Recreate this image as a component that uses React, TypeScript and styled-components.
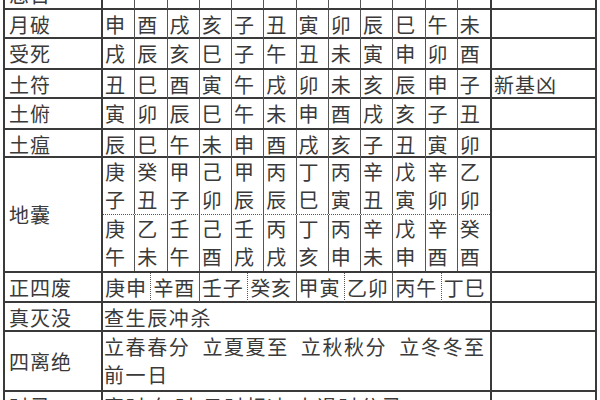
import React from 'react';
import styled, { createGlobalStyle } from 'styled-components';

const GlobalStyle = createGlobalStyle`
  html, body {
    margin: 0;
    padding: 0;
    background: #fff;
    overflow: hidden;
  }
  body {
    font-family: "Noto Sans CJK SC", "Noto Sans", sans-serif;
    color: #3a3a3a;
  }
`;

const LINE = '#3a3a3a';

const Sheet = styled.div`
  width: 594px;
  margin: -20px 0 0 3px;
  border-left: 2px solid ${LINE};
  border-right: 2px solid ${LINE};
  box-sizing: border-box;
`;

const Row = styled.div<{ $h: number }>`
  display: grid;
  grid-template-columns: 98px 389px 1fr;
  height: ${(p) => p.$h}px;
  border-bottom: 2px solid ${LINE};
  box-sizing: border-box;
`;

const Label = styled.div`
  display: flex;
  align-items: center;
  padding-left: 4px;
  font-size: 20px;
  letter-spacing: 1px;
  border-right: 2px solid ${LINE};
  white-space: nowrap;
`;

const Note = styled.div`
  display: flex;
  align-items: center;
  padding-left: 2px;
  font-size: 20px;
  letter-spacing: 1px;
`;

const Cells = styled.div<{ $n: number }>`
  display: grid;
  grid-template-columns: repeat(${(p) => p.$n}, 1fr);
  height: 100%;
  border-right: 2px solid ${LINE};
  box-sizing: border-box;
`;

const Cell = styled.div<{ $dotted?: boolean }>`
  display: flex;
  align-items: center;
  padding-left: 2px;
  font-size: 20px;
  letter-spacing: 1px;
  white-space: nowrap;
  border-right: 1px ${(p) => (p.$dotted ? 'dotted' : 'solid')} #555;
  &:last-child {
    border-right: none;
  }
`;

const Stack = styled.div`
  display: flex;
  flex-direction: column;
  border-right: 2px solid ${LINE};
`;

const SubRow = styled(Cells)<{ $dottedBottom?: boolean }>`
  height: auto;
  flex: 1;
  border-right: none;
  border-bottom: ${(p) => (p.$dottedBottom ? `1px dotted #555` : 'none')};
`;

const StackCell = styled(Cell)`
  flex-direction: column;
  align-items: flex-start;
  justify-content: center;
  line-height: 28px;
`;

const Text = styled.div`
  display: flex;
  flex-direction: column;
  justify-content: center;
  padding-left: 1px;
  font-size: 20px;
  letter-spacing: 1.6px;
  line-height: 28px;
  white-space: nowrap;
  border-right: 2px solid ${LINE};
`;

const Phrases = styled.div`
  display: flex;
  gap: 12px;
`;

const months: { label: string; cells: string[]; note?: string; h: number }[] = [
  { label: '月破', cells: '申酉戌亥子丑寅卯辰巳午未'.split(''), h: 29 },
  { label: '受死', cells: '戌辰亥巳子午丑未寅申卯酉'.split(''), h: 31 },
  { label: '土符', cells: '丑巳酉寅午戌卯未亥辰申子'.split(''), note: '新基凶', h: 29 },
  { label: '土俯', cells: '寅卯辰巳午未申酉戌亥子丑'.split(''), h: 31 },
  { label: '土瘟', cells: '辰巳午未申酉戌亥子丑寅卯'.split(''), h: 28 },
];

const diNangTop = ['庚子', '癸丑', '甲子', '己卯', '甲辰', '丙辰', '丁巳', '丙寅', '辛丑', '戊寅', '辛卯', '乙卯'];
const diNangBottom = ['庚午', '乙未', '壬午', '己酉', '壬戌', '丙戌', '丁亥', '丙申', '辛未', '戊申', '辛酉', '癸酉'];
const siFei = ['庚申', '辛酉', '壬子', '癸亥', '甲寅', '乙卯', '丙午', '丁巳'];

export default function App() {
  return (
    <>
      <GlobalStyle />
      <Sheet>
        <Row $h={30}>
          <Label>忌日</Label>
          <Cells $n={12}>
            {Array.from({ length: 12 }).map((_, i) => (
              <Cell key={i} />
            ))}
          </Cells>
          <Note />
        </Row>

        {months.map((m) => (
          <Row key={m.label} $h={m.h}>
            <Label>{m.label}</Label>
            <Cells $n={12}>
              {m.cells.map((c, i) => (
                <Cell key={i}>{c}</Cell>
              ))}
            </Cells>
            <Note>{m.note}</Note>
          </Row>
        ))}

        <Row $h={115}>
          <Label>地囊</Label>
          <Stack>
            <SubRow $n={12} $dottedBottom>
              {diNangTop.map((c, i) => (
                <StackCell key={i}>
                  <span>{c[0]}</span>
                  <span>{c[1]}</span>
                </StackCell>
              ))}
            </SubRow>
            <SubRow $n={12}>
              {diNangBottom.map((c, i) => (
                <StackCell key={i}>
                  <span>{c[0]}</span>
                  <span>{c[1]}</span>
                </StackCell>
              ))}
            </SubRow>
          </Stack>
          <Note />
        </Row>

        <Row $h={30}>
          <Label>正四废</Label>
          <Cells $n={8}>
            {siFei.map((c, i) => (
              <Cell key={i} $dotted={i % 2 === 0}>
                {c}
              </Cell>
            ))}
          </Cells>
          <Note />
        </Row>

        <Row $h={29}>
          <Label>真灭没</Label>
          <Text>查生辰冲杀</Text>
          <Note />
        </Row>

        <Row $h={60}>
          <Label>四离绝</Label>
          <Text>
            <Phrases>
              <span>立春春分</span>
              <span>立夏夏至</span>
              <span>立秋秋分</span>
              <span>立冬冬至</span>
            </Phrases>
            <span>前一日</span>
          </Text>
          <Note />
        </Row>

        <Row $h={30}>
          <Label>时忌</Label>
          <Text>寅时 午时 日时相冲 大退时分忌</Text>
          <Note />
        </Row>
      </Sheet>
    </>
  );
}
